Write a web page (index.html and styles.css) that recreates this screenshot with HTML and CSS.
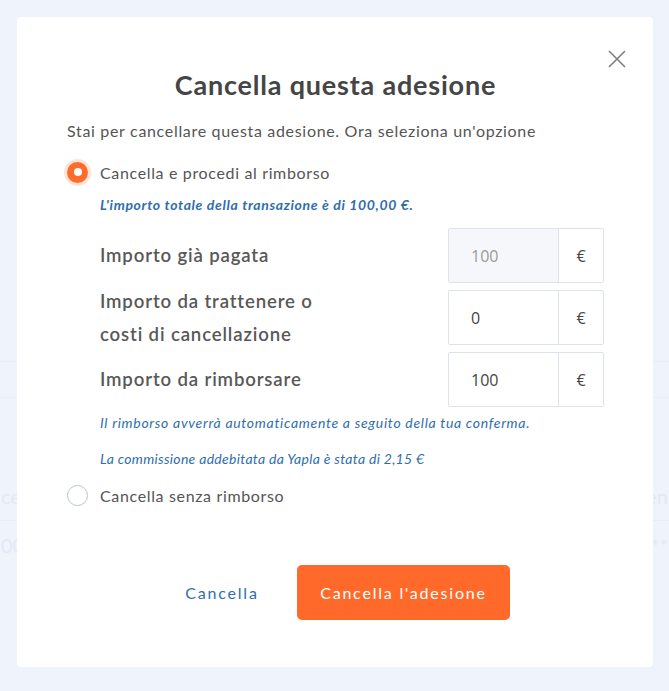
FILE: index.html
```html
<!DOCTYPE html>
<html lang="it">
<head>
<meta charset="utf-8">
<title>Cancella questa adesione</title>
<link rel="stylesheet" href="styles.css">
</head>
<body>
<div class="page">
  <div class="ghost-line line1"></div>
  <div class="ghost-line line2"></div>
  <div class="ghost-row row1"><span>ce</span><span>en</span></div>
  <div class="ghost-row row2"><span>00</span><span>**</span></div>
</div>

<div class="modal">
  <button class="close" aria-label="Chiudi">
    <svg width="18" height="18" viewBox="0 0 18 18"><path d="M1 1L17 17M17 1L1 17" stroke="#7a7a7a" stroke-width="1.5" fill="none"/></svg>
  </button>
  <h1 class="title">Cancella questa adesione</h1>
  <p class="subtitle">Stai per cancellare questa adesione. Ora seleziona un'opzione</p>

  <div class="option">
    <span class="radio checked"></span>
    <span class="option-label">Cancella e procedi al rimborso</span>
  </div>

  <div class="details">
    <p class="info">L'importo totale della transazione è di 100,00 €.</p>

    <div class="field">
      <div class="field-label">Importo già pagata</div>
      <div class="group">
        <div class="input disabled">100</div>
        <div class="addon">€</div>
      </div>
    </div>
    <div class="field">
      <div class="field-label">Importo da trattenere o<br>costi di cancellazione</div>
      <div class="group">
        <div class="input">0</div>
        <div class="addon">€</div>
      </div>
    </div>
    <div class="field">
      <div class="field-label">Importo da rimborsare</div>
      <div class="group">
        <div class="input">100</div>
        <div class="addon">€</div>
      </div>
    </div>

    <p class="note note1">Il rimborso avverrà automaticamente a seguito della tua conferma.</p>
    <p class="note note2">La commissione addebitata da Yapla è stata di 2,15 €</p>
  </div>

  <div class="option option2">
    <span class="radio"></span>
    <span class="option-label">Cancella senza rimborso</span>
  </div>

  <div class="actions">
    <button class="btn-link">Cancella</button>
    <button class="btn-primary">Cancella l'adesione</button>
  </div>
</div>
</body>
</html>
```

FILE: styles.css
```css
* { box-sizing: border-box; }
html, body {
  margin: 0;
  padding: 0;
  width: 669px;
  height: 691px;
  overflow: hidden;
}
body {
  background: #eef3fc;
  font-family: "Lato", "Open Sans", sans-serif;
  color: #4a4a4a;
  position: relative;
}
.page {
  padding-top: 361px;
}
.ghost-line {
  height: 1px;
  background: #e8edf7;
}
.line1 { margin-bottom: 35px; }
.line2 { margin-bottom: 86px; }
.ghost-row {
  display: flex;
  justify-content: space-between;
  font-size: 20px;
  line-height: 24px;
  color: #e3e9f4;
  padding: 0 1px;
}
.row1 {
  border-bottom: 1px solid #e8edf7;
  padding-bottom: 12px;
}
.row2 { padding-top: 12px; }

.modal {
  position: absolute;
  left: 17px;
  top: 17px;
  width: 636px;
  height: 650px;
  background: #fff;
  border-radius: 4px;
  padding: 51px 49px 0 50px;
}
.close {
  position: absolute;
  right: 26px;
  top: 32px;
  width: 20px;
  height: 20px;
  padding: 1px;
  border: none;
  background: none;
  cursor: pointer;
}
.title {
  margin: 0;
  text-align: center;
  font-size: 27px;
  line-height: 34px;
  font-weight: 700;
  color: #454545;
  letter-spacing: 0.8px;
}
.subtitle {
  margin: 17px 0 0;
  font-size: 16px;
  line-height: 24px;
  color: #555;
  letter-spacing: 0.68px;
}
.option {
  display: flex;
  align-items: center;
  gap: 12px;
  height: 24px;
  margin-top: 17px;
}
.option2 { margin-top: 14px; }
.option-label {
  font-size: 16px;
  color: #555;
  letter-spacing: 0.65px;
}
.radio {
  width: 21px;
  height: 21px;
  border-radius: 50%;
  border: 1px solid #b9c4d5;
  background: #fff;
  flex: none;
}
.radio.checked {
  border: none;
  background: #ff6b2b;
  box-shadow: 0 0 0 3px rgba(255, 107, 43, 0.18);
  display: flex;
  align-items: center;
  justify-content: center;
}
.radio.checked::after {
  content: "";
  width: 8px;
  height: 8px;
  border-radius: 50%;
  background: #fff;
}
.details {
  padding-left: 33px;
}
.info {
  margin: 11px 0 13px;
  font-size: 14px;
  line-height: 20px;
  font-style: italic;
  font-weight: 700;
  color: #2f6eae;
  letter-spacing: 0.66px;
}
.field {
  display: flex;
  align-items: center;
  justify-content: space-between;
  height: 55px;
  margin-bottom: 7px;
}
.field-label {
  font-size: 18.6px;
  line-height: 33px;
  font-weight: 600;
  color: #585858;
  letter-spacing: 0.85px;
}
.group {
  display: flex;
  width: 156px;
  height: 55px;
  border: 1px solid #dde3ec;
  border-radius: 2px;
}
.input {
  width: 109px;
  display: flex;
  align-items: center;
  padding-left: 22px;
  font-size: 16px;
  color: #444;
  font-family: "Open Sans", sans-serif;
}
.input.disabled {
  background: #f5f7fa;
  color: #9a9a9a;
}
.addon {
  flex: 1;
  border-left: 1px solid #dde3ec;
  display: flex;
  align-items: center;
  justify-content: center;
  font-size: 16px;
  color: #444;
  font-family: "Open Sans", sans-serif;
}
.note {
  margin: 0;
  font-size: 14px;
  line-height: 20px;
  font-style: italic;
  color: #2f6eae;
  letter-spacing: 0.5px;
}
.note1 { margin-top: -1px; letter-spacing: 0.7px; }
.note2 { margin-top: 16px; letter-spacing: 0.3px; }
.actions {
  display: flex;
  justify-content: center;
  align-items: center;
  gap: 14px;
  margin-top: 58px;
}
.btn-link {
  width: 122px;
  height: 55px;
  border: none;
  background: none;
  font-family: inherit;
  font-size: 16px;
  color: #2f6eae;
  letter-spacing: 1.8px;
  cursor: pointer;
}
.btn-primary {
  width: 213px;
  height: 55px;
  border: none;
  border-radius: 5px;
  background: #ff6a2b;
  color: #fff;
  font-family: inherit;
  font-size: 16px;
  letter-spacing: 1.8px;
  cursor: pointer;
}
```
